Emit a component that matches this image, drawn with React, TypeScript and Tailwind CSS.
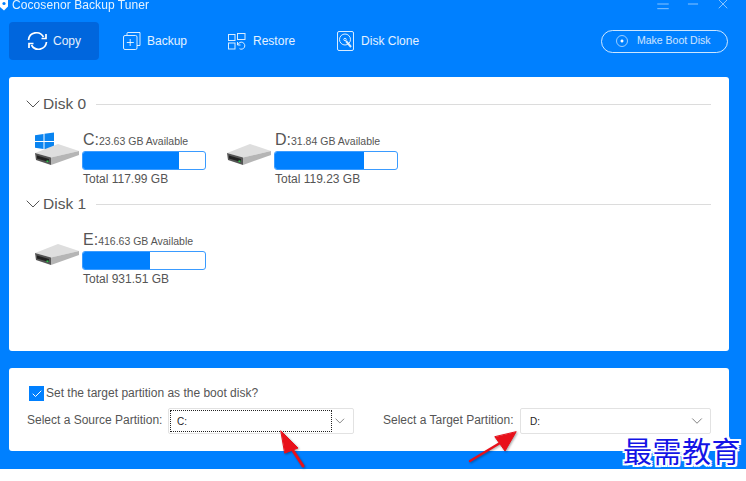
import { Check, ChevronDown, Menu, Minus, X } from "lucide-react";

function DriveIcon({ windows = false }: { windows?: boolean }) {
  return (
    <svg width="46" height="36" viewBox="0 0 46 36" className="shrink-0">
      {windows && (
        <g fill="#0a84f0">
          <path d="M1 4.2 9.5 3V10H1z" />
          <path d="M10.5 2.8 20 1.5V10H10.5z" />
          <path d="M1 11H9.5V18L1 16.8z" />
          <path d="M10.5 11H20V19.5L10.5 18.2z" />
        </g>
      )}
      <path d="M1 22 24 13 45 20 17 26.5z" fill="#dedede" />
      <path d="M1 22 17 26.5V34L2 29z" fill="#555" />
      <path d="M17 26.5 45 20V24L17 34z" fill="#b5b5b5" />
      <path d="M3 24.5 15 28V31L3 27.5z" fill="#222" />
      <rect x="12.5" y="29.5" width="2" height="1.6" fill="#2fc84a" />
    </svg>
  );
}

function Drive({ letter, free, total, used, windows }: { letter: string; free: string; total: string; used: string; windows?: boolean }) {
  return (
    <div className="flex w-[192px] items-start">
      <div className="-mt-[3px] w-[49px] pl-px">
        <DriveIcon windows={windows} />
      </div>
      <div className="w-[124px]">
        <div className="flex h-[17px] items-baseline pl-px text-[#555]">
          <span className="text-[16px] leading-[12px]">{letter}:</span>
          <span className="text-[10.5px] leading-[12px]">{free} GB Available</span>
        </div>
        <div className="h-[19px] overflow-hidden rounded-[3px] border border-[#3a9bff] bg-white">
          <div className={`h-full bg-[#0080ff] ${used}`} />
        </div>
        <div className="mt-px pl-px text-[12px] leading-[16px] text-[#555]">Total {total} GB</div>
      </div>
    </div>
  );
}

function DiskHeader({ label }: { label: string }) {
  return (
    <div className="flex h-[18px] items-center text-[#555]">
      <ChevronDown size={24} strokeWidth={1} className="-ml-[6px] shrink-0" />
      <span className="-ml-[2px] text-[15.5px] leading-[18px]">{label}</span>
      <div className="ml-[10px] h-px flex-1 bg-[#dcdcdc]" />
    </div>
  );
}

export default function App() {
  return (
    <div className="relative h-[481px] w-[746px] overflow-hidden bg-white font-['Liberation_Sans',sans-serif]">
      <div className="h-[469px] bg-[#0080ff] px-[9px]">
        {/* title bar, cut off by the top edge */}
        <div className="flex h-[22px] items-start text-white">
          <svg width="9" height="11" viewBox="0 0 9 11" className="-ml-[9px] shrink-0">
            <path d="M0 0H8V6.5L4 10.5 0 7z" fill="white" />
            <circle cx="4" cy="3.5" r="1.6" fill="#0080ff" />
          </svg>
          <span className="-mt-[2px] ml-[3px] text-[12px] leading-[14px] tracking-[0.08px] opacity-90">Cocosenor Backup Tuner</span>
          <div className="ml-auto -mt-[4px] flex items-center gap-[14px] pr-[6px] opacity-80">
            <Menu size={16} strokeWidth={1} />
            <Minus size={16} strokeWidth={1} />
            <X size={16} strokeWidth={1} />
          </div>
        </div>

        {/* toolbar */}
        <div className="flex h-[38px] items-center text-[12px] text-white/90">
          <div className="flex h-full w-[90px] items-center rounded bg-[#0066dd] pl-[18px]">
            <svg width="21" height="20" viewBox="0 0 21 20" fill="none" stroke="white" strokeWidth="1.7">
              <path d="M1.5 9a8 8 0 0 1 15-3" />
              <path d="M19.5 11a8 8 0 0 1-15 3" />
              <path d="M19 3v4.5h-4.5" />
              <path d="M2 17v-4.5h4.5" />
            </svg>
            <span className="ml-[5px]">Copy</span>
          </div>
          <div className="ml-[24px] flex items-center">
            <svg width="18" height="18" viewBox="0 0 18 18" fill="none" stroke="white" strokeOpacity="0.85">
              <rect x="0.5" y="3.5" width="13.5" height="14" rx="1.5" />
              <path d="M4 3V1.5a1 1 0 0 1 1-1h12v13h-3" />
              <path d="M7.2 7v7M3.8 10.5h7" />
            </svg>
            <span className="ml-[6px]">Backup</span>
          </div>
          <div className="ml-[41px] flex items-center">
            <svg width="18" height="17" viewBox="0 0 18 17" fill="none" stroke="white" strokeOpacity="0.85">
              <rect x="0.5" y="1.5" width="6.5" height="6" />
              <rect x="9.5" y="0.5" width="7.5" height="6" />
              <rect x="0.5" y="10" width="6.5" height="6" />
              <path d="M10 11.5a3.5 3.5 0 1 1 1.5 4.2" />
              <path d="M9.5 9v3h3" />
            </svg>
            <span className="ml-[7px]">Restore</span>
          </div>
          <div className="ml-[42px] flex items-center">
            <svg width="17" height="20" viewBox="0 0 17 20" fill="none" stroke="white" strokeOpacity="0.85">
              <rect x="0.5" y="0.5" width="16" height="19" rx="1.5" />
              <circle cx="8" cy="8.5" r="5.5" />
              <circle cx="8" cy="8.5" r="1.2" />
              <path d="M9 10l5 6" strokeWidth="2" />
            </svg>
            <span className="ml-[7px]">Disk Clone</span>
          </div>
          <div className="ml-auto mr-[9px] flex h-[23px] w-[127px] items-center rounded-full border border-white/80 pl-[14px] text-[10.5px] text-white/80">
            <svg width="12" height="12" viewBox="0 0 12 12" fill="none" stroke="white" strokeOpacity="0.6">
              <circle cx="6" cy="6" r="5.5" />
              <circle cx="6" cy="6" r="1.2" fill="white" />
            </svg>
            <span className="ml-[9px]">Make Boot Disk</span>
          </div>
        </div>

        {/* disk list */}
        <div className="mt-[17px] h-[274px] w-[720px] rounded-[3px] bg-white px-[18px] pt-[18px]">
          <DiskHeader label="Disk 0" />
          <div className="mt-[21px] flex pl-[6px]">
            <Drive letter="C" free="23.63" total="117.99" used="w-[79%]" windows />
            <Drive letter="D" free="31.84" total="119.23" used="w-[73%]" />
          </div>
          <div className="mt-[8px]">
            <DiskHeader label="Disk 1" />
          </div>
          <div className="mt-[21px] flex pl-[6px]">
            <Drive letter="E" free="416.63" total="931.51" used="w-[55%]" />
          </div>
        </div>

        {/* partition options */}
        <div className="mt-[17px] h-[83px] w-[720px] rounded-[3px] bg-white pl-[18px] pr-[18px] pt-[18px]">
          <div className="flex items-center pl-[2px] text-[12px] leading-[15px] text-[#555]">
            <div className="flex h-[15px] w-[15px] items-center justify-center bg-[#0080ff]">
              <Check size={12} strokeWidth={2} className="text-white" />
            </div>
            <span className="ml-[2px]">Set the target partition as the boot disk?</span>
          </div>
          <div className="mt-[7px] flex items-center text-[12px] text-[#555]">
            <span className="-mt-[2px] w-[141px]">Select a Source Partition:</span>
            <div className="flex h-[26px] w-[186px] items-center rounded-[2px] border border-[#e2e2e2] pr-[5px]">
              <div className="ml-[1px] flex h-[22px] w-[165px] items-center border border-dotted border-[#222] pl-[6px] text-[10px] text-[#222]">C:</div>
              <ChevronDown size={16} strokeWidth={1.2} className="ml-auto text-[#666]" />
            </div>
            <span className="-mt-[2px] ml-[29px] w-[137px]">Select a Target Partition:</span>
            <div className="flex h-[26px] w-[191px] items-center rounded-[2px] border border-[#e2e2e2] pl-[9px] pr-[4px] text-[10px] text-[#222]">
              D:
              <ChevronDown size={18} strokeWidth={1.1} className="ml-auto text-[#666]" />
            </div>
          </div>
        </div>
      </div>

      {/* red annotation arrows */}
      <svg width="746" height="481" className="pointer-events-none absolute left-0 top-0 drop-shadow-[1px_1px_1px_rgba(0,0,0,0.35)]">
        <g fill="#e8101a" stroke="#e8101a" strokeLinecap="round">
          <path d="M303 466 290 446" strokeWidth="3" fill="none" />
          <path d="M281 431 298 448 285 453z" />
          <path d="M470 461 500 443" strokeWidth="2.5" fill="none" />
          <path d="M516 432 505 451 495 437z" />
        </g>
      </svg>

      {/* watermark */}
      <div className="absolute left-[623px] top-[434px] font-['Noto_Sans_CJK_SC',serif] text-[29px] font-normal leading-[32px] tracking-[0.5px] text-[#1414e6] [text-shadow:2px_0_0_#fff,-2px_0_0_#fff,0_2px_0_#fff,0_-2px_0_#fff,2px_2px_0_#fff,-2px_-2px_0_#fff,2px_-2px_0_#fff,-2px_2px_0_#fff]">
        最需教育
      </div>
    </div>
  );
}
